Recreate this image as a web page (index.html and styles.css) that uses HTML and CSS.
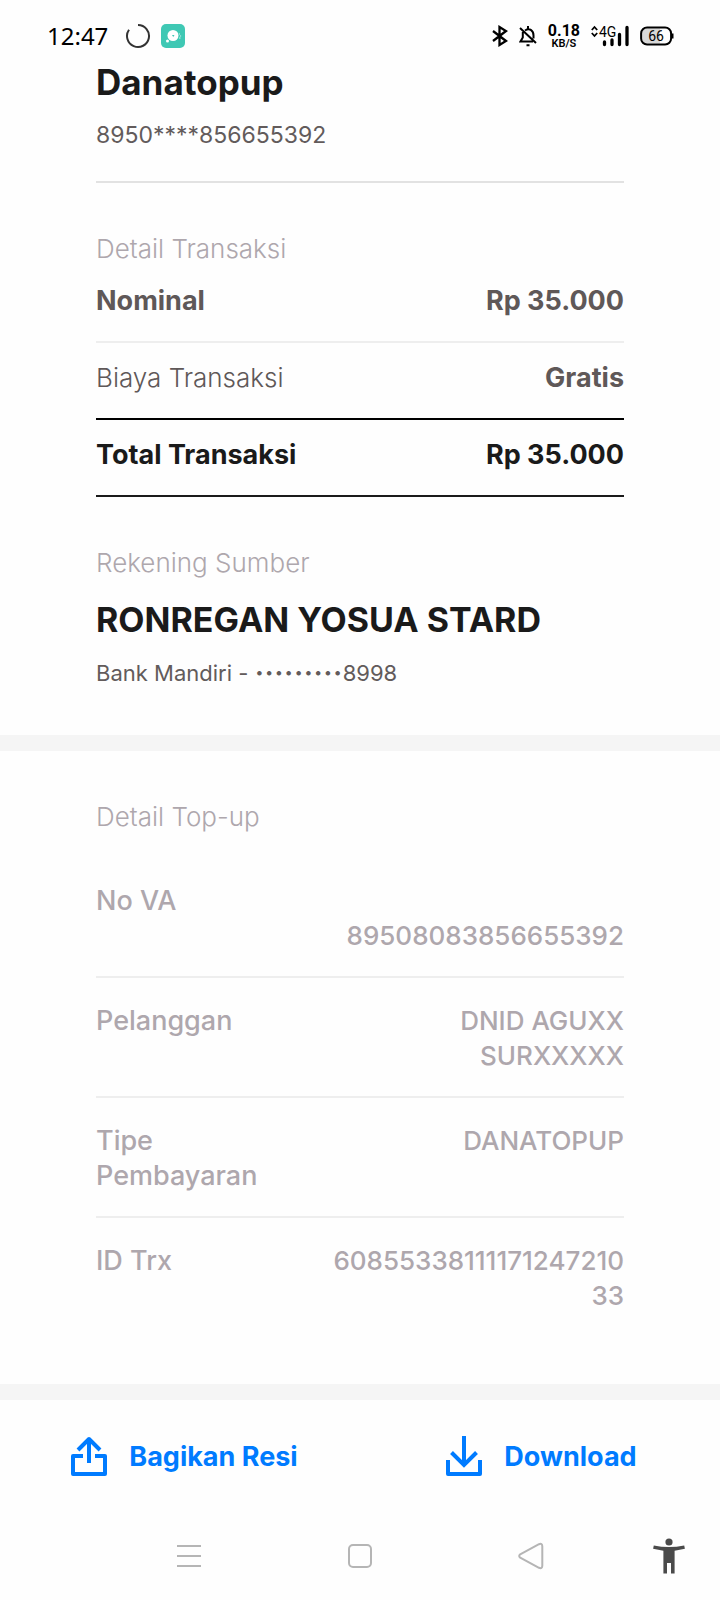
FILE: index.html
```html
<!DOCTYPE html>
<html lang="id">
<head>
<meta charset="utf-8">
<meta name="viewport" content="width=device-width, initial-scale=1">
<title>Resi Danatopup</title>
<link rel="stylesheet" href="styles.css">
</head>
<body>
<div class="screen">
  <header class="status">
    <div class="status-left">
      <span class="clock">12:47</span>
      <svg class="spinner" width="26" height="26" viewBox="0 0 26 26" fill="none" stroke="#333" stroke-width="2" aria-hidden="true"><path d="M13 2A11 11 0 1 1 4 6.700"/></svg>
      <svg class="app" width="24" height="24" viewBox="0 0 24 24" aria-hidden="true"><rect width="24" height="24" rx="5" fill="#3fc8b4"/><circle cx="12" cy="11.500" r="5.500" fill="#fff"/><path d="M11 11h2.500l-1.200 2z" fill="#3fc8b4"/><circle cx="6.500" cy="17" r="1.500" fill="#fff"/><path d="M18 10h1M18 14h1.500M19.500 11.500v1" stroke="#d4f4ee" stroke-width="1.200"/></svg>
    </div>
    <div class="status-right">
      <svg width="16" height="22" viewBox="0 0 16 22" fill="none" stroke="#000" stroke-width="2.300" aria-hidden="true"><path d="M1 6l13 10-6.500 4V2L14 6 1 16"/></svg>
      <svg width="18" height="22" viewBox="0 0 18 22" fill="none" stroke="#000" stroke-width="2" aria-hidden="true"><path d="M1 3l16 15M6 5.500c5-3 8.500.500 8.500 5v3M3.800 7v5.500L1.500 16.500H14M9 1v2.500M7.500 20.200h3"/></svg>
      <span class="speed"><span class="rate">0.18</span><span class="unit">KB/S</span></span>
      <svg width="38" height="22" viewBox="0 0 38 22" aria-hidden="true"><path d="M.800 5L3.500 2l2.700 3M.800 8l2.700 3 2.700-3" fill="none" stroke="#000" stroke-width="1.800"/><text x="8" y="12" class="net">4G</text><path d="M13.500 17v2.500M21 15v4.500M28.500 9.500v10M36 2.500v17" stroke="#000" stroke-width="3.300" stroke-linecap="round"/></svg>
      <svg width="34" height="20" viewBox="0 0 34 20" aria-hidden="true"><path d="M7 2.500h13v15H7q-5 0-5-5v-5q0-5 5-5" fill="#d8d8d8"/><rect x="1.100" y="1.500" width="30" height="17" rx="6" fill="none" stroke="#000" stroke-width="2"/><path d="M32.500 7.500v5" stroke="#000" stroke-width="2"/><text x="16" y="15" text-anchor="middle" class="charge">66</text></svg>
    </div>
  </header>

  <main>
    <section class="block receipt">
      <div class="party">
        <h1 class="name">Danatopup</h1>
        <p class="account">8950****856655392</p>
      </div>
      <h2 class="caption">Detail Transaksi</h2>
      <dl class="costs">
        <div class="cost first"><dt>Nominal</dt><dd>Rp 35.000</dd></div>
        <div class="cost fee"><dt>Biaya Transaksi</dt><dd>Gratis</dd></div>
        <div class="cost total"><dt>Total Transaksi</dt><dd>Rp 35.000</dd></div>
      </dl>
      <h2 class="caption">Rekening Sumber</h2>
      <p class="name source">RONREGAN YOSUA STARD</p>
      <p class="account bank">Bank Mandiri - <span class="mask">·········</span>8998</p>
    </section>

    <section class="block topup">
      <h2 class="caption">Detail Top-up</h2>
      <dl class="details">
        <div class="detail"><dt>No VA</dt><dd><br>89508083856655392</dd></div>
        <div class="detail"><dt>Pelanggan</dt><dd>DNID AGUXX SURXXXXX</dd></div>
        <div class="detail"><dt>Tipe Pembayaran</dt><dd>DANATOPUP</dd></div>
        <div class="detail"><dt>ID Trx</dt><dd>60855338111171247210<wbr>33</dd></div>
      </dl>
    </section>
  </main>

  <div class="actions">
    <button class="action" type="button">
      <svg width="36" height="40" viewBox="0 0 36 40" fill="none" stroke="#007bff" stroke-width="4" aria-hidden="true"><path d="M12 20H2v18h32V20H24M18 27V4M7 14L18 3l11 11" stroke-linejoin="round"/></svg>
      Bagikan Resi
    </button>
    <button class="action" type="button">
      <svg width="36" height="40" viewBox="0 0 36 40" fill="none" stroke="#007bff" stroke-width="4" aria-hidden="true"><path d="M2 24v14h32V24" stroke-linejoin="round"/><path d="M18 0v28M5.500 16.500L18 29l12.500-12.500"/></svg>
      Download
    </button>
  </div>

  <nav class="system">
    <span></span>
    <button class="key" type="button" aria-label="Menu"><svg width="24" height="24" viewBox="0 0 24 24" stroke="#b5b5b5" stroke-width="2" aria-hidden="true"><path d="M0 2h24M0 12h24M0 22h24"/></svg></button>
    <button class="key" type="button" aria-label="Home"><svg width="26" height="26" viewBox="0 0 26 26" fill="none" stroke="#b5b5b5" stroke-width="2" aria-hidden="true"><rect x="2" y="2" width="22" height="22" rx="4"/></svg></button>
    <button class="key" type="button" aria-label="Back"><svg width="26" height="28" viewBox="0 0 26 28" fill="none" stroke="#b5b5b5" stroke-width="2" stroke-linejoin="round" aria-hidden="true"><path d="M2.200 12.300L21 2.200q3.300-1.200 3.300 2v19.600q0 3.200-3.300 2L2.200 15.700q-2-1.700 0-3.400z"/></svg></button>
    <button class="key" type="button" aria-label="Accessibility"><svg width="32" height="36" viewBox="0 0 32 36" fill="#4a4a4a" aria-hidden="true"><circle cx="16" cy="4" r="3.600"/><path d="M.800 7.500Q16 10.500 31.200 7.500l.700 3.200-10.300 2V35.500h-3.600V25h-4v10.500h-3.600V12.700L.100 10.700z"/></svg></button>
  </nav>
</div>
</body>
</html>
```
FILE: styles.css
```css
* {
  box-sizing: border-box;
}

body {
  margin: 0;
  background: #fefefe;
  color: #1a1a1a;
  font-family: Inter, "Liberation Sans", sans-serif;
}

h1, h2, p, dl, dd {
  margin: 0;
}

button {
  padding: 0;
  border: 0;
  background: none;
  font: inherit;
}

svg {
  display: block;
  flex: none;
}

.screen {
  display: flex;
  flex-direction: column;
  min-height: 100vh;
}

.status,
.status-left,
.status-right {
  display: flex;
  align-items: center;
}

.status {
  justify-content: space-between;
  height: 60px;
  padding: 12px 46px 0 47px;
  color: #000;
}

.status-right {
  gap: 11px;
}

.clock {
  font: 24px/24px "Noto Sans", sans-serif;
}

.spinner {
  margin-left: 17px;
}

.app {
  margin-left: 10px;
}

.speed {
  display: flex;
  flex-direction: column;
  align-items: center;
  font-family: Roboto, sans-serif;
}

.rate {
  font-size: 16px;
  font-weight: 700;
  line-height: 15px;
}

.unit {
  font-size: 11px;
  font-weight: 600;
  line-height: 11px;
}

.net {
  font: 14px Roboto, sans-serif;
}

.charge {
  font: 14px Roboto, sans-serif;
}

.block {
  padding: 0 96px;
  border-bottom: 16px solid #f5f5f5;
}

.receipt {
  padding-bottom: 47px;
}

.party {
  padding-bottom: 31px;
  border-bottom: 2px solid #e2e2e2;
}

.name {
  font-size: 35px;
  font-weight: 700;
  line-height: 44px;
}

.account {
  margin-top: 16px;
  color: #625b5b;
  font-size: 23px;
  font-weight: 400;
  line-height: 30px;
}

.bank {
  font-size: 22px;
}

.mask {
  font-size: 34px;
  line-height: 22px;
  vertical-align: -4px;
}

.caption {
  padding-top: 48px;
  color: #aea7ad;
  font-size: 26px;
  font-weight: 300;
  line-height: 35px;
}

.source {
  margin-top: 18px;
  font-size: 34px;
}

.cost {
  display: flex;
  justify-content: space-between;
  padding: 17px 0 23px;
  border-bottom: 2px solid #1a1a1a;
  color: #5f5858;
  font-size: 27px;
  font-weight: 700;
  line-height: 35px;
}

.first {
  border-color: #eee;
}

.fee {
  border-color: #000;
}

.fee dt {
  font-size: 26px;
  font-weight: 300;
}

.total {
  color: #1a1a1a;
}

.topup {
  padding-bottom: 48px;
}

.details {
  padding-top: 24px;
}

.detail {
  display: grid;
  grid-template-columns: 2fr 3fr;
  gap: 32px;
  padding: 25px 0 23px;
  border-bottom: 2px solid #eee;
  color: #aea7ad;
  font-size: 27px;
  font-weight: 500;
  line-height: 35px;
}

.detail:last-child {
  border-bottom: 0;
}

.detail dd {
  font-size: 26px;
  text-align: right;
}

.actions {
  display: grid;
  grid-template-columns: 1fr 1fr;
  height: 112px;
  padding-left: 6px;
}

.action {
  display: flex;
  align-items: center;
  justify-content: center;
  gap: 22px;
  color: #007bff;
  font-size: 27px;
  font-weight: 700;
}

.system {
  display: grid;
  grid-template-columns: 3fr 5fr 5fr 5fr 3fr;
  height: 88px;
}

.key {
  display: grid;
  place-items: center;
}
```
